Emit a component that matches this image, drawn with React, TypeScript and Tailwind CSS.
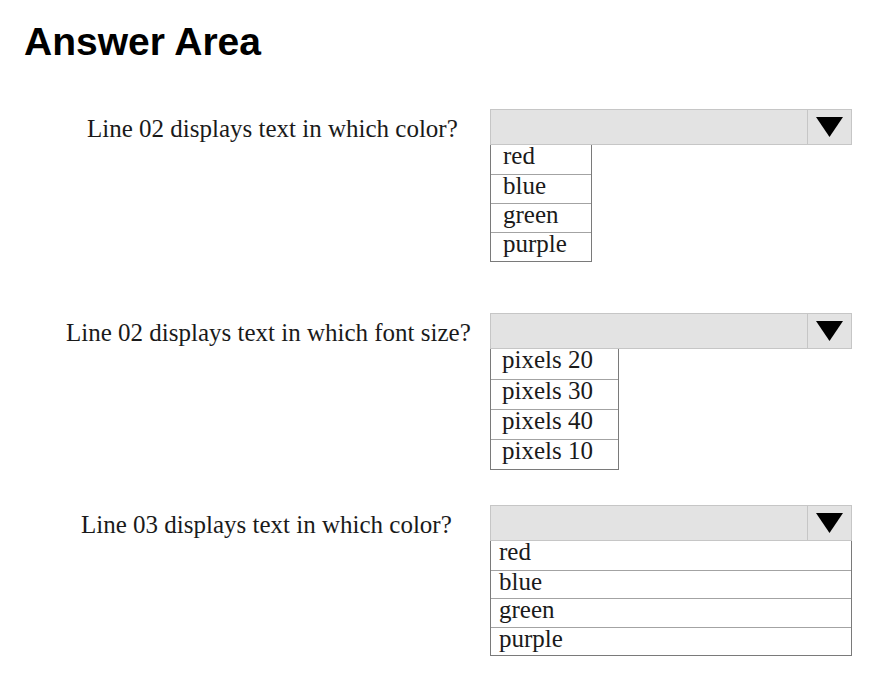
import React from "react";

type Question = {
  label: string;
  labelPad: string;
  options: string[];
  listWidth: string;
  rowHeight: string;
  textPad: string;
  top: string;
};

const questions: Question[] = [
  {
    label: "Line 02 displays text in which color?",
    labelPad: "pl-[63px]",
    options: ["red", "blue", "green", "purple"],
    listWidth: "w-[102px]",
    rowHeight: "h-[29px]",
    textPad: "pl-[12px]",
    top: "mt-[48px]",
  },
  {
    label: "Line 02 displays text in which font size?",
    labelPad: "pl-[42px]",
    options: ["pixels 20", "pixels 30", "pixels 40", "pixels 10"],
    listWidth: "w-[129px]",
    rowHeight: "h-[30px]",
    textPad: "pl-[11px]",
    top: "mt-[51px]",
  },
  {
    label: "Line 03 displays text in which color?",
    labelPad: "pl-[57px]",
    options: ["red", "blue", "green", "purple"],
    listWidth: "w-full",
    rowHeight: "h-[28.5px]",
    textPad: "pl-[8px]",
    top: "mt-[35px]",
  },
];

function Arrow() {
  return (
    <svg width="27" height="20" viewBox="0 0 27 20">
      <polygon points="0,0 27,0 13.5,20" fill="#000" />
    </svg>
  );
}

function Row({ q }: { q: Question }) {
  return (
    <div className={`flex ${q.top}`}>
      <div className="w-[466px] shrink-0">
        <div
          className={`h-[36px] flex items-center pt-[3px] ${q.labelPad} text-[25px] text-[#1a1a1a] whitespace-nowrap`}
          style={{ fontFamily: '"Liberation Serif", "Times New Roman", serif' }}
        >
          {q.label}
        </div>
      </div>
      <div className="w-[362px] shrink-0">
        <div className="h-[36px] flex border border-[#c6c6c6] bg-[#e3e3e3]">
          <div className="flex-1" />
          <div className="w-[44px] border-l border-[#c6c6c6] flex items-center justify-center">
            <Arrow />
          </div>
        </div>
        <div
          className={`${q.listWidth} border border-t-0 border-[#7a7a7a] bg-white`}
          style={{ fontFamily: '"Liberation Serif", "Times New Roman", serif' }}
        >
          {q.options.map((o, i) => (
            <div
              key={o}
              className={`${q.rowHeight} ${q.textPad} text-[25px] leading-[22px] text-[#1a1a1a] whitespace-nowrap ${
                i > 0 ? "border-t border-[#a3a3a3]" : ""
              }`}
            >
              {o}
            </div>
          ))}
        </div>
      </div>
    </div>
  );
}

export default function App() {
  return (
    <div className="w-[869px] h-[675px] bg-white pl-6 pt-[22px] overflow-hidden">
      <h1
        className="text-[39px] leading-none font-bold text-black"
        style={{ fontFamily: '"Liberation Sans", Arial, sans-serif' }}
      >
        Answer Area
      </h1>
      {questions.map((q) => (
        <Row key={q.label} q={q} />
      ))}
    </div>
  );
}
